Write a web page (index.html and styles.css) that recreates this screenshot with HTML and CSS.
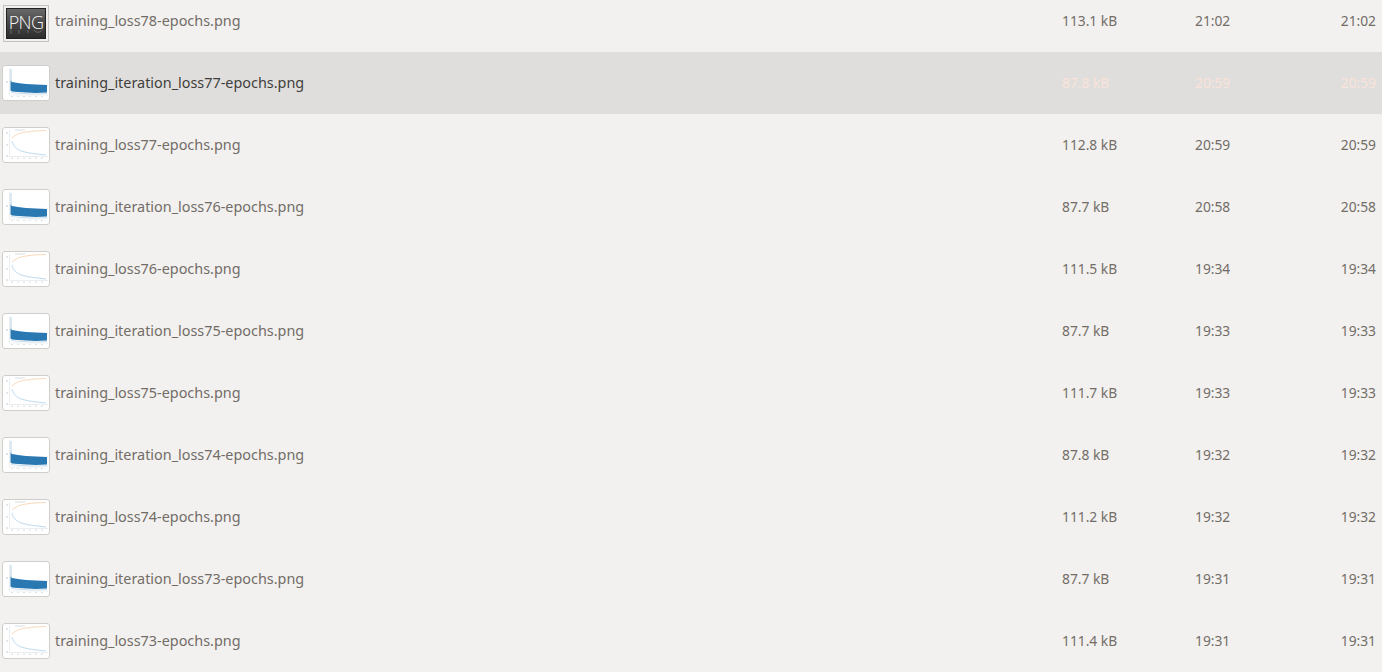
FILE: index.html
```html
<!DOCTYPE html>
<html lang="en">
<head>
<meta charset="utf-8">
<title>Files</title>
<link rel="stylesheet" href="styles.css">
</head>
<body>
<svg class="defs" width="0" height="0" aria-hidden="true">
  <defs>
    <linearGradient id="dark" x1="0" y1="0" x2="0" y2="1">
      <stop offset="0" stop-color="#6a6a6a"/>
      <stop offset="0.55" stop-color="#444"/>
      <stop offset="1" stop-color="#2c2c2c"/>
    </linearGradient>
    <symbol id="thumb-iter" viewBox="0 0 48 36">
      <rect x="0.5" y="0.5" width="47" height="35" rx="2.5" fill="#fff" stroke="#cfcecb"/>
      <path d="M7.5 3V30H46" fill="none" stroke="#e3e7ea" stroke-width="0.7"/>
      <path d="M9 4V16" stroke="#b4d3e8" stroke-width="1"/>
      <path d="M8.500 15.500L10 17L16 18L24 19L34 19.500L45 20V27.500L34 28L24 27.500L16 27L10 26.500L8.500 25.500Z" fill="#2a78b2"/>
      <path d="M9 27.500L20 28.500L34 29L45 28.500" fill="none" stroke="#bcd7ea" stroke-width="0.8"/>
      <path d="M4 17H6M10 31V32M16 31V32M22 31V32M28 31V32M34 31V32M40 31V32" stroke="#a9aeb2" stroke-width="0.7"/>
    </symbol>
    <symbol id="thumb-loss" viewBox="0 0 48 36">
      <rect x="0.5" y="0.5" width="47" height="35" rx="2.5" fill="#fff" stroke="#cfcecb"/>
      <path d="M7.500 3V29.500H46" fill="none" stroke="#e3e7ea" stroke-width="0.7"/>
      <path d="M10 11C13 8 17 6 24 5C31 4 38 3.500 44 3.500" fill="none" stroke="#f9d8ba" stroke-width="1"/>
      <path d="M10 14C11 19 14 22 19 24C27 26.500 36 27 44 28" fill="none" stroke="#c0daed" stroke-width="1"/>
      <path d="M13 3H23" stroke="#d2d5d7" stroke-width="0.8"/>
      <path d="M4 6H6M4 18H6M4 29H6M10 30.500V32M16 30.500V32M22 30.500V32M28 30.500V32M34 30.500V32M40 30.500V32" stroke="#b4b8bb" stroke-width="0.7"/>
    </symbol>
  </defs>
</svg>

<main class="list">
  <div class="row">
    <svg class="icon icon-png" viewBox="0 0 46 37" role="img" aria-label="PNG">
      <rect x="0.5" y="0.5" width="45" height="36" fill="#f0efed" stroke="#c4c3c0"/>
      <rect x="3.500" y="3.500" width="39" height="30" fill="url(#dark)" stroke="#222"/>
      <text class="png-text" x="23" y="24" text-anchor="middle">PNG</text>
      <path class="png-reflect" d="M8 25V29M16 25V29M25 25V28M31 25C33 28 37 28 39 25"/>
    </svg>
    <span class="name">training_loss78-epochs.png</span><span class="meta">113.1 kB</span><span class="meta">21:02</span><span class="meta modified">21:02</span>
  </div>
  <div class="row selected">
    <svg class="icon"><use href="#thumb-iter"/></svg>
    <span class="name">training_iteration_loss77-epochs.png</span><span class="meta">87.8 kB</span><span class="meta">20:59</span><span class="meta modified">20:59</span>
  </div>
  <div class="row">
    <svg class="icon"><use href="#thumb-loss"/></svg>
    <span class="name">training_loss77-epochs.png</span><span class="meta">112.8 kB</span><span class="meta">20:59</span><span class="meta modified">20:59</span>
  </div>
  <div class="row">
    <svg class="icon"><use href="#thumb-iter"/></svg>
    <span class="name">training_iteration_loss76-epochs.png</span><span class="meta">87.7 kB</span><span class="meta">20:58</span><span class="meta modified">20:58</span>
  </div>
  <div class="row">
    <svg class="icon"><use href="#thumb-loss"/></svg>
    <span class="name">training_loss76-epochs.png</span><span class="meta">111.5 kB</span><span class="meta">19:34</span><span class="meta modified">19:34</span>
  </div>
  <div class="row">
    <svg class="icon"><use href="#thumb-iter"/></svg>
    <span class="name">training_iteration_loss75-epochs.png</span><span class="meta">87.7 kB</span><span class="meta">19:33</span><span class="meta modified">19:33</span>
  </div>
  <div class="row">
    <svg class="icon"><use href="#thumb-loss"/></svg>
    <span class="name">training_loss75-epochs.png</span><span class="meta">111.7 kB</span><span class="meta">19:33</span><span class="meta modified">19:33</span>
  </div>
  <div class="row">
    <svg class="icon"><use href="#thumb-iter"/></svg>
    <span class="name">training_iteration_loss74-epochs.png</span><span class="meta">87.8 kB</span><span class="meta">19:32</span><span class="meta modified">19:32</span>
  </div>
  <div class="row">
    <svg class="icon"><use href="#thumb-loss"/></svg>
    <span class="name">training_loss74-epochs.png</span><span class="meta">111.2 kB</span><span class="meta">19:32</span><span class="meta modified">19:32</span>
  </div>
  <div class="row">
    <svg class="icon"><use href="#thumb-iter"/></svg>
    <span class="name">training_iteration_loss73-epochs.png</span><span class="meta">87.7 kB</span><span class="meta">19:31</span><span class="meta modified">19:31</span>
  </div>
  <div class="row">
    <svg class="icon"><use href="#thumb-loss"/></svg>
    <span class="name">training_loss73-epochs.png</span><span class="meta">111.4 kB</span><span class="meta">19:31</span><span class="meta modified">19:31</span>
  </div>
</main>
</body>
</html>
```
FILE: styles.css
```css
html, body {
  margin: 0;
  height: 100%;
  overflow: hidden;
  background: #f2f1ef;
}

.defs {
  display: block;
  height: 0;
}

.list {
  margin-top: -10px;
  font-family: "Noto Sans", "Open Sans", sans-serif;
  color: #736d68;
}

.row {
  display: grid;
  grid-template-columns: 55px 1007px 133px 1fr auto;
  align-items: center;
  height: 62px;
  white-space: nowrap;
}

.row.selected {
  background: #dfdedc;
  color: #fae3da;
}

.row.selected .name {
  color: #3f3e3c;
}

.name {
  font-size: 14.400px;
  padding-bottom: 2px;
}

.meta {
  font-size: 13.800px;
  padding-bottom: 2px;
}

.icon {
  display: block;
  width: 48px;
  height: 36px;
  margin-left: 2px;
}

.icon-png {
  width: 46px;
  height: 37px;
  margin-left: 3px;
  margin-top: 5px;
}

.png-text {
  font-family: "Open Sans", "Noto Sans", sans-serif;
  font-weight: 300;
  font-size: 18px;
  letter-spacing: -0.600px;
  fill: #f6f6f6;
}

.png-reflect {
  fill: none;
  stroke: #fff;
  stroke-opacity: 0.25;
  stroke-width: 1;
}

.modified {
  padding-right: 6px;
}
```
